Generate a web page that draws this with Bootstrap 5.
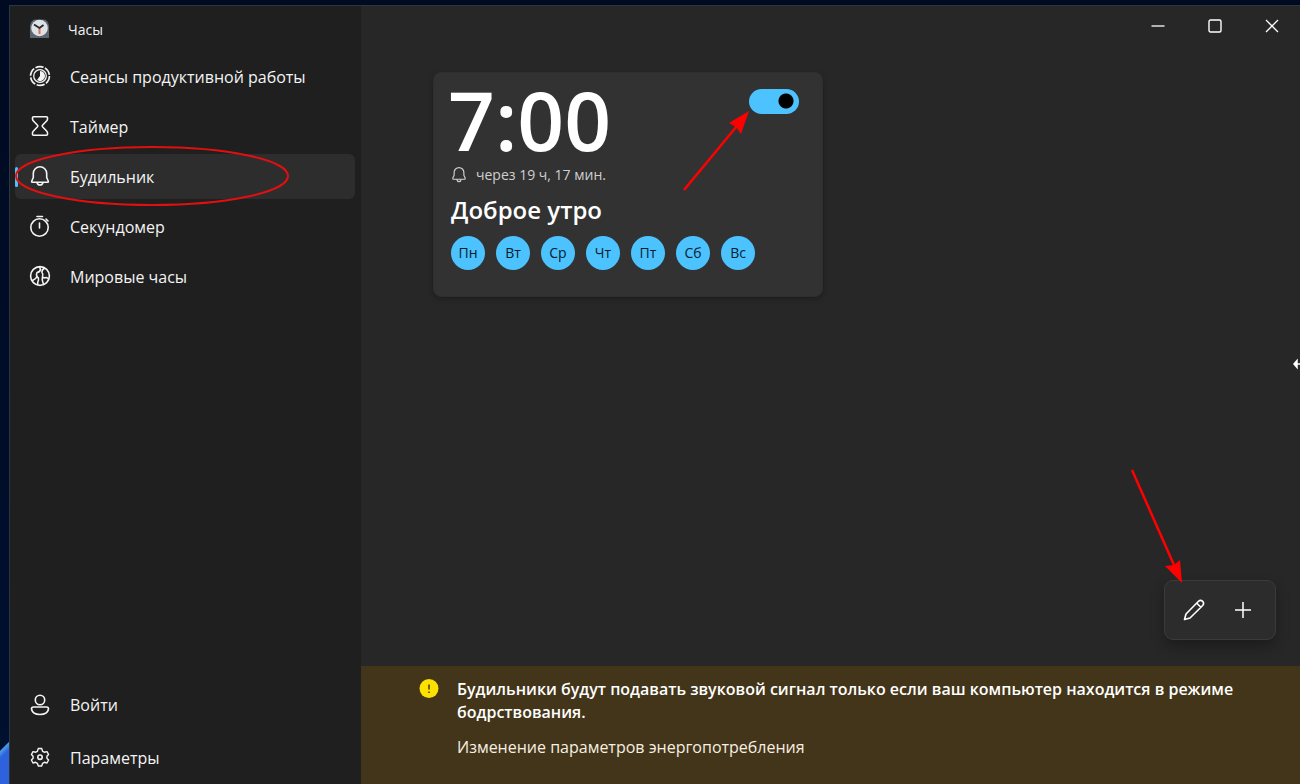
<!DOCTYPE html>
<html lang="ru">
<head>
<meta charset="utf-8">
<meta name="viewport" content="width=device-width, initial-scale=1">
<title>Часы</title>
<link href="https://cdn.jsdelivr.net/npm/bootstrap@5.3.0/dist/css/bootstrap.min.css" rel="stylesheet">
<style>
  body {
    font-family: "Open Sans", "Noto Sans", sans-serif;
    font-size: 16px;
    line-height: 23px;
    font-weight: 500;
    color: #f4f4f4;
    background: linear-gradient(135deg, transparent 10px, #4a9de8 11px, #2d62dc 16px) 0 100% / 14px 48px no-repeat, linear-gradient(#000a20, #001030);
    padding: 5px 0 0 9px;
  }
  .app-window { border: 1px solid #2b3645; border-width: 1px 0 0 1px; background: #272727; }
  .sidebar { width: 351px; background: #1f1f1f; padding: 0 6px 4px 5px; }
  .app-title { font-size: 14px; height: 46px; padding-left: 14px; gap: 18px; }
  .side-nav { gap: 5px; padding-top: 2px; }
  .side-nav .nav-link { height: 45px; padding: 0 14px; gap: 19px; color: #f4f4f4; border-radius: 6px; }
  .side-nav .nav-link.active { background: #2d2d2d; }
  .side-nav .nav-link.active::before { content: ""; position: absolute; left: 0; width: 3px; height: 20px; border-radius: 2px; background: #4cc2ff; }
  .side-nav span { padding-top: 2px; }
  .side-nav svg { display: block; }
  .side-foot { gap: 8px; }
  svg { flex: none; overflow: visible; }
  .ico { fill: none; stroke: currentColor; stroke-width: 1.6; stroke-linecap: round; stroke-linejoin: round; }
  .mark-up { position: absolute; pointer-events: none; z-index: 5; }
  .caption-btn { width: 57px; height: 40px; padding: 0 0 4px; color: #fff; border: 0; border-radius: 0; }
  .alarm-list { padding: 26px 24px 0 72px; }
  .alarm-card { width: 390px; height: 225px; background: #323232; border: 1px solid #2e2e2e; border-radius: 8px; color: #fff; padding: 16px 23px 0 17px; box-shadow: 0 2px 5px rgba(0, 0, 0, .25); }
  .alarm-time { font-size: 82px; line-height: 66px; font-weight: 600; margin: -3px 0 3px -3px; }
  .alarm-left { font-size: 14px; line-height: 20px; color: #cfcfcf; gap: 9px; margin-top: 10px; }
  .alarm-name { font-size: 24px; line-height: 32px; font-weight: 600; margin: 9px 0 0; }
  .alarm-days { gap: 11px; margin-top: 10px; }
  .day-btn { width: 34px; height: 34px; padding: 0; border: 0; font-size: 14px; line-height: 34px; font-weight: 500; color: #06202c; background: #4cc2ff; }
  .alarm-switch.form-check-input { width: 50px; height: 25px; margin: 0; border: 0; background: radial-gradient(circle at 37px 12px, #000 7px, #4cc2ff 8px); }
  .tool-bar { width: 112px; height: 60px; background: #2c2c2c; border: 1px solid #3b3b3b; border-radius: 9px; box-shadow: 0 6px 14px rgba(0, 0, 0, .3); margin: 0 24px 26px 0; padding: 0 3px 3px 0; }
  .tool-bar .btn { width: 49px; height: 50px; padding: 0; color: #fff; border: 0; }
  .notice { background: #433519; border: 0; border-radius: 0; color: #fff; font-size: 16px; padding: 12px 48px 25px 58px; gap: 18px; min-height: 118px; }
  .notice a { color: #f6efe2; text-decoration: none; font-weight: 500; }
  .notice p { margin: 0 0 12px; font-weight: 600; }
  .resize-pointer { position: absolute; right: 0; top: 352px; }
</style>
</head>
<body class="d-flex vh-100 overflow-hidden">
<div class="app-window d-flex flex-grow-1">
  <aside class="sidebar d-flex flex-column flex-shrink-0">
    <div class="app-title d-flex align-items-center">
      <svg width="21" height="20" viewBox="0 0 21 20" aria-hidden="true">
        <path d="M1 19V7Q2 1 6 .5H15Q19 1 20 7V19Z" fill="#5b6670"/>
        <circle cx="10.500" cy="9" r="8.300" fill="#dfe2e5"/>
        <path d="M10.500 9V15" stroke="#e36d55" stroke-width="2"/>
        <path d="M5 5.500L10.500 9L14.500 6" fill="none" stroke="#22272b" stroke-width="1.800"/>
      </svg>
      <span>Часы</span>
    </div>
    <nav class="side-nav nav flex-column">
      <a class="nav-link d-flex align-items-center" href="#focus">
        <svg class="ico" width="22" height="22" viewBox="0 0 22 22" aria-hidden="true"><circle cx="11" cy="10" r="9.400" stroke-width="1.700" stroke-dasharray="8.240 1.600" stroke-linecap="butt"/><circle cx="11" cy="10" r="6.300" stroke-width="1.300"/><path d="M11 5V10L14.500 13.500A5 5 0 0 0 11 5ZM11 10L14.500 13.500A5 5 0 0 1 8 14Z" fill="currentColor" stroke="none"/></svg>
        <span>Сеансы продуктивной работы</span>
      </a>
      <a class="nav-link d-flex align-items-center" href="#timer">
        <svg class="ico" width="22" height="22" viewBox="0 0 22 22" aria-hidden="true"><path d="M4.500 .7H17.500Q18.500 .7 18.500 1.700V3Q18.500 4 17.800 4.700L13.500 9.200Q12.800 10 13.500 10.800L17.800 15.300Q18.500 16 18.500 17V18.300Q18.500 19.300 17.500 19.300H4.500Q3.500 19.300 3.500 18.300V17Q3.500 16 4.200 15.300L8.500 10.800Q9.200 10 8.500 9.200L4.200 4.700Q3.500 4 3.500 3V1.700Q3.500 .7 4.500 .7Z"/></svg>
        <span>Таймер</span>
      </a>
      <a class="nav-link active position-relative d-flex align-items-center" href="#alarm" aria-current="page">
        <svg class="ico" width="22" height="22" viewBox="0 0 22 22" aria-hidden="true"><path d="M11 .8A6.700 6.700 0 0 0 4.300 7.500V11.500L2.700 15.200Q2.500 16.300 3.500 16.300H18.500Q19.500 16.300 19.300 15.200L17.700 11.500V7.500A6.700 6.700 0 0 0 11 .8ZM8 16.500Q8.500 19 11 19T14 16.500"/></svg>
        <span>Будильник</span>
        <svg class="mark-up" style="left:1px;top:-8px" width="274" height="60" aria-hidden="true"><ellipse cx="136" cy="30" rx="136" ry="29" fill="none" stroke="#e01010" stroke-width="2"/></svg>
      </a>
      <a class="nav-link d-flex align-items-center" href="#stopwatch">
        <svg class="ico" width="22" height="22" viewBox="0 0 22 22" aria-hidden="true"><circle cx="10.500" cy="11.500" r="8.700"/><path d="M10.500 7V12M8 .5H13.500M17 3L19 5"/></svg>
        <span>Секундомер</span>
      </a>
      <a class="nav-link d-flex align-items-center" href="#world">
        <svg class="ico" width="22" height="22" viewBox="0 0 22 22" aria-hidden="true"><circle cx="11" cy="10" r="9.400"/><path d="M10.500 .8L11.500 3.500Q11 6 8 6.500Q7 8.500 8 10.500Q7 13 3.500 14.500M15.500 2.200Q12.500 4 13 6.500Q14.500 8.500 13.500 10.500Q14 12.500 17 11.500Q19 12 19.500 13M8 10.500Q10 12 9.500 14Q8.500 16 8.500 18.800M13.500 10.500Q12.500 14 14.500 18.500"/></svg>
        <span>Мировые часы</span>
      </a>
    </nav>
    <nav class="side-nav side-foot nav flex-column mt-auto">
      <a class="nav-link d-flex align-items-center" href="#signin">
        <svg class="ico" width="22" height="22" viewBox="0 0 22 22" aria-hidden="true"><circle cx="11" cy="6" r="4.700"/><path d="M4.500 13H17.500Q19.500 13 19.500 15Q18.500 20.500 11 20.500T2.500 15Q2.500 13 4.500 13Z"/></svg>
        <span>Войти</span>
      </a>
      <a class="nav-link d-flex align-items-center" href="#settings">
        <svg class="ico" width="22" height="22" viewBox="0 0 22 22" aria-hidden="true"><path d="M9.300 1.500H12.700L13.600 4.300L15.300 5.200L18 4.600L19.600 7.500L17.900 9.300V11.300L19.600 13L18 16L15.300 15.300L13.600 16.300L12.700 19H9.300L8.400 16.300L6.700 15.300L4 16L2.400 13L4.100 11.300V9.300L2.400 7.500L4 4.600L6.700 5.200L8.400 4.300Z" stroke-width="1.400"/><circle cx="11" cy="10.200" r="2.200"/></svg>
        <span>Параметры</span>
      </a>
    </nav>
  </aside>

  <main class="d-flex flex-column flex-grow-1 position-relative">
    <div class="d-flex justify-content-end">
      <button class="btn caption-btn" type="button" aria-label="Свернуть"><svg width="14" height="14" viewBox="0 0 14 14"><path d="M0.500 7H13.500" stroke="#fff" stroke-width="1.300"/></svg></button>
      <button class="btn caption-btn" type="button" aria-label="Развернуть"><svg width="14" height="14" viewBox="0 0 14 14"><rect x="1" y="1" width="12" height="12" rx="1.500" fill="none" stroke="#fff" stroke-width="1.400"/></svg></button>
      <button class="btn caption-btn" type="button" aria-label="Закрыть"><svg width="14" height="14" viewBox="0 0 14 14"><path d="M1 1L13 13M13 1L1 13" stroke="#fff" stroke-width="1.300"/></svg></button>
    </div>

    <section class="alarm-list flex-grow-1">
      <article class="alarm-card position-relative">
        <div class="d-flex justify-content-between">
          <div class="alarm-time">7:00</div>
          <div class="form-check form-switch p-0 m-0 d-flex"><input class="form-check-input alarm-switch" type="checkbox" role="switch" checked aria-label="Доброе утро"></div>
        </div>
        <div class="alarm-left d-flex align-items-center">
          <svg class="ico" width="16" height="16" viewBox="0 0 22 22" aria-hidden="true"><path d="M11 .8A6.700 6.700 0 0 0 4.300 7.500V11.500L2.500 15.200Q2.300 16.800 3.500 16.800H18.500Q19.700 16.800 19.500 15.200L17.700 11.500V7.500A6.700 6.700 0 0 0 11 .8ZM8 17Q8.500 20 11 20T14 17"/></svg>
          <span>через 19 ч, 17 мин.</span>
        </div>
        <h2 class="alarm-name">Доброе утро</h2>
        <div class="alarm-days d-flex">
          <button class="btn day-btn rounded-circle" type="button">Пн</button>
          <button class="btn day-btn rounded-circle" type="button">Вт</button>
          <button class="btn day-btn rounded-circle" type="button">Ср</button>
          <button class="btn day-btn rounded-circle" type="button">Чт</button>
          <button class="btn day-btn rounded-circle" type="button">Пт</button>
          <button class="btn day-btn rounded-circle" type="button">Сб</button>
          <button class="btn day-btn rounded-circle" type="button">Вс</button>
        </div>
        <svg class="mark-up" style="left:249px;top:38px" width="67" height="82" aria-hidden="true"><path d="M1 79L54 15" stroke="#f00" stroke-width="2.500"/><path d="M66 0L58 23L53 16L46 12Z" fill="#f00"/></svg>
      </article>
    </section>

    <div class="tool-bar d-flex align-items-center justify-content-center align-self-end position-relative">
      <button class="btn" type="button" aria-label="Изменить"><svg class="ico" width="22" height="22" viewBox="0 0 22 22"><path d="M1.500 20.500L3 15L15.500 2.300Q17.500 .5 19.700 2.300Q21.500 4.500 19.700 6.500L7 19ZM13.800 4.200L17.900 8.200"/></svg></button>
      <button class="btn" type="button" aria-label="Добавить"><svg width="18" height="18" viewBox="0 0 18 18"><path d="M9 1V17M1 9H17" stroke="#fff" stroke-width="1.500"/></svg></button>
      <svg class="mark-up" style="left:-34px;top:-112px" width="52" height="113" aria-hidden="true"><path d="M1 1L43 96" stroke="#f00" stroke-width="2.500"/><path d="M51 114L34 97L43 96L49 91Z" fill="#f00"/></svg>
    </div>

    <div class="notice alert d-flex mb-0" role="alert">
      <svg width="20" height="20" viewBox="0 0 20 20" aria-hidden="true"><circle cx="10" cy="10.500" r="9.500" fill="#fce100"/><path d="M10 6.500V11.500M10 13.500V15" stroke="#433519" stroke-width="1.500"/></svg>
      <div>
        <p>Будильники будут подавать звуковой сигнал только если ваш компьютер находится в режиме бодрствования.</p>
        <a href="#power">Изменение параметров энергопотребления</a>
      </div>
    </div>

    <svg class="resize-pointer" width="8" height="12" viewBox="0 0 8 12" aria-hidden="true"><path d="M8 6H3M5 2.500L2 6L5 9.500Z" fill="#fff" stroke="#fff" stroke-width="1.500"/></svg>
  </main>
</div>
<script src="https://cdn.jsdelivr.net/npm/bootstrap@5.3.0/dist/js/bootstrap.bundle.min.js"></script>
</body>
</html>
